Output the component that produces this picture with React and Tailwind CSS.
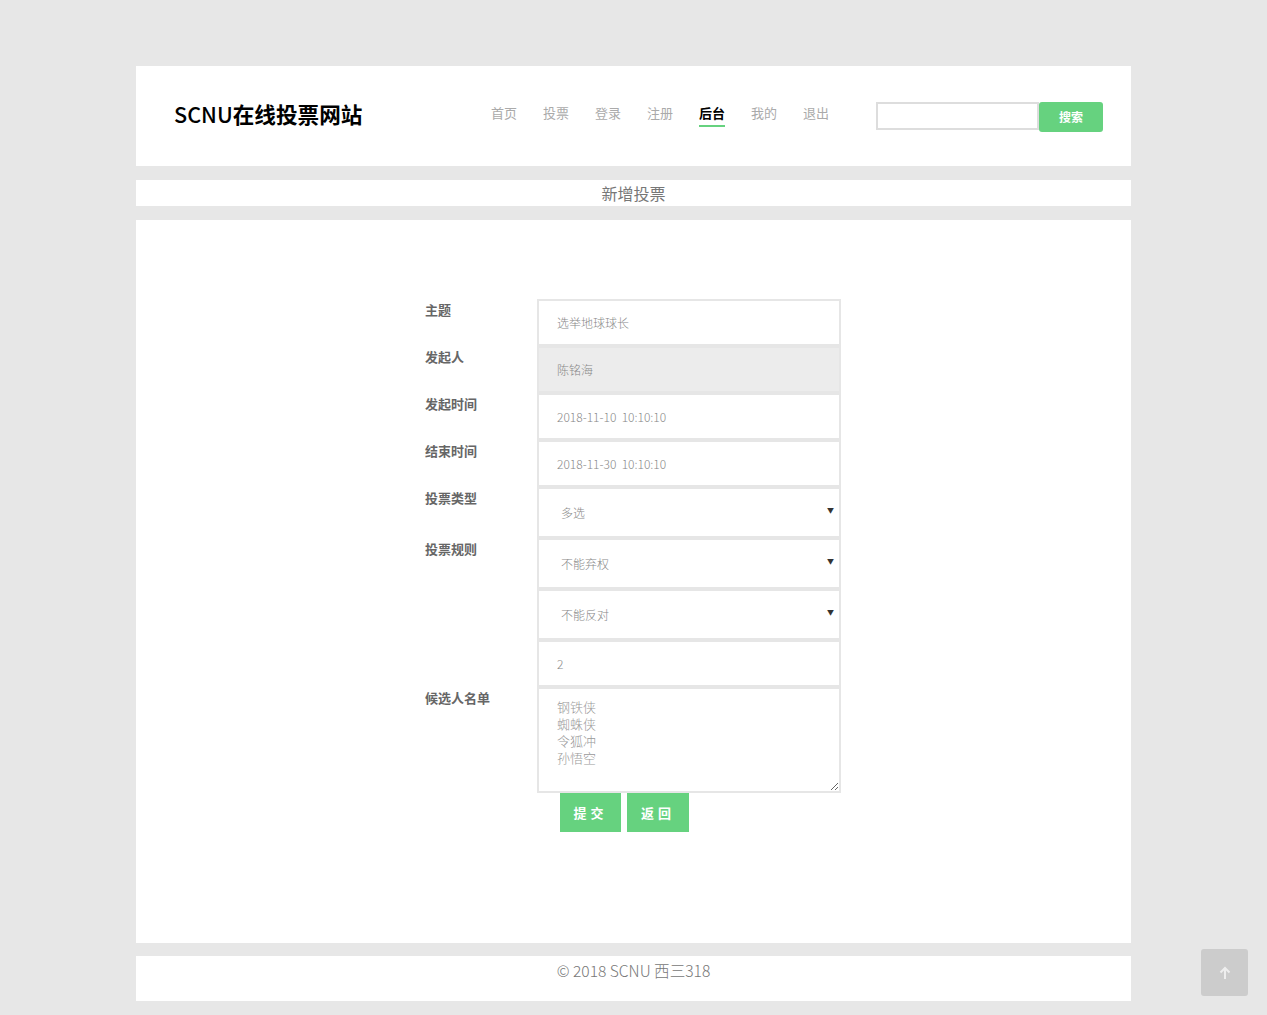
import React from 'react';

const font = { fontFamily: '"Noto Sans CJK SC", "Noto Sans", sans-serif' };

const navItems = ['首页', '投票', '登录', '注册', '后台', '我的', '退出'];

const Row = ({ label, children }) => (
  <div className="flex">
    <div className="w-[112px] pt-[3px] text-[13px] leading-4 font-bold text-[#666]">{label}</div>
    <div className="w-[304px]">{children}</div>
  </div>
);

const TextField = ({ value, disabled }) => (
  <input
    defaultValue={value}
    disabled={disabled}
    className={`box-border block h-[47px] w-full border-2 border-[#e6e6e6] px-[18px] text-[12px] font-light text-[#888] outline-none ${disabled ? 'bg-[#ececec]' : 'bg-white'}`}
    style={font}
  />
);

const SelectField = ({ value }) => (
  <div className="relative">
    <select
      defaultValue={value}
      className="box-border block h-[51px] w-full appearance-none border-2 border-[#e6e6e6] bg-white pl-[22px] text-[12px] font-light text-[#888] outline-none"
      style={font}
    >
      <option>{value}</option>
    </select>
    <span className="pointer-events-none absolute right-[7px] top-[20px] text-[7px] leading-none text-[#333]">▼</span>
  </div>
);

const App = () => (
  <div className="min-h-[1015px] bg-[#e7e7e7] pt-[66px] pb-[14px]" style={font}>
    <div className="mx-auto w-[995px]">
      <header className="flex h-[100px] items-center bg-white pl-[38px] pr-[28px]">
        <div className="pb-[4px] text-[21.6px] leading-none text-black">
          <span className="font-medium">SCNU</span>
          <span className="font-bold">在线投票网站</span>
        </div>
        <nav className="ml-auto flex gap-[26px] pb-[6px]">
          {navItems.map((item) => (
            <a
              key={item}
              className={`relative text-[13px] leading-4 ${item === '后台' ? 'font-bold text-black' : 'text-[#aaa]'}`}
            >
              {item}
              {item === '后台' && <span className="absolute left-0 right-0 top-[20px] h-[2px] bg-[#66d27f]" />}
            </a>
          ))}
        </nav>
        <div className="ml-[47px] flex items-start pt-[2px]">
          <input className="box-border h-[28px] w-[163px] border-2 border-[#ddd] bg-white outline-none" />
          <button className="h-[30px] w-[64px] rounded-[3px] bg-[#66d27f] text-[12px] font-bold text-white">搜索</button>
        </div>
      </header>

      <div className="mt-[14px] h-[26px] bg-white text-center text-[16px] leading-[26px] text-[#777]">新增投票</div>

      <main className="mt-[14px] flex h-[723px] bg-white pl-[289px] pt-[79px]">
        <div className="w-[416px]">
          <Row label="主题"><TextField value="选举地球球长" /></Row>
          <Row label="发起人"><TextField value="陈铭海" disabled /></Row>
          <Row label="发起时间"><TextField value="2018-11-10  10:10:10" /></Row>
          <Row label="结束时间"><TextField value="2018-11-30  10:10:10" /></Row>
          <Row label="投票类型"><SelectField value="多选" /></Row>
          <Row label="投票规则"><SelectField value="不能弃权" /></Row>
          <Row label=""><SelectField value="不能反对" /></Row>
          <Row label=""><TextField value="2" /></Row>
          <Row label="候选人名单">
            <textarea
              defaultValue={'钢铁侠\n蜘蛛侠\n令狐冲\n孙悟空'}
              className="box-border block h-[106px] w-full border-2 border-[#e6e6e6] bg-white px-[18px] pt-[9px] text-[13px] leading-[17px] font-light text-[#999] outline-none"
              style={font}
            />
          </Row>
          <div className="flex gap-[6px] pl-[135px]">
            <button className="h-[39px] w-[61px] bg-[#66d27f] text-[13px] font-bold tracking-[4px] text-white">提交</button>
            <button className="h-[39px] w-[62px] bg-[#66d27f] text-[13px] font-bold tracking-[4px] text-white">返回</button>
          </div>
        </div>
      </main>

      <footer className="mt-[13px] h-[45px] bg-white pt-[4px] text-center text-[15.6px] leading-5 font-light text-[#777]">
        © 2018 SCNU 西三318
      </footer>
    </div>

    <button className="fixed bottom-[19px] right-[19px] flex h-[47px] w-[47px] items-center justify-center rounded-[3px] bg-[#cccccc]">
      <svg width="12" height="14" viewBox="0 0 12 14" fill="none" stroke="#eeeeee" strokeWidth="2">
        <path d="M6 13V2M1.5 6.5L6 2l4.5 4.5" />
      </svg>
    </button>
  </div>
);

export default App;
